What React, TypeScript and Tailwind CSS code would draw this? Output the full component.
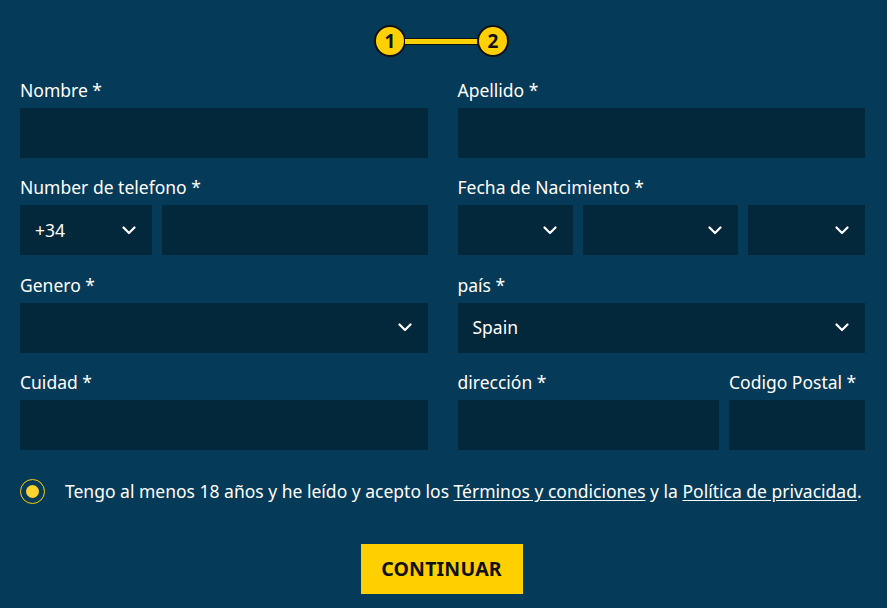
import { ReactNode } from 'react';

const font = { fontFamily: '"Noto Sans", "Open Sans", sans-serif' };

function Chevron() {
  return (
    <svg width="14" height="9" viewBox="0 0 14 9" className="shrink-0">
      <path d="M1.5 1.5 L7 7 L12.5 1.5" fill="none" stroke="#ffffff" strokeWidth="2.2" strokeLinecap="round" strokeLinejoin="round" />
    </svg>
  );
}

function Label({ children }: { children: ReactNode }) {
  return <div className="text-[17.5px] leading-6 text-white mb-[6px] whitespace-nowrap">{children}</div>;
}

function Input() {
  return <div className="h-[50px] bg-[#03273b]" />;
}

function Select({ value }: { value?: string }) {
  return (
    <div className="h-[50px] bg-[#03273b] flex items-center justify-between pl-[15px] pr-[16px] text-[17.5px] text-white">
      <span>{value ?? ''}</span>
      <Chevron />
    </div>
  );
}

function Step({ n }: { n: number }) {
  return (
    <div className="w-[32px] h-[32px] rounded-full bg-[#ffd000] border-2 border-[#111] flex items-center justify-center text-[19px] font-bold text-[#111] leading-none">
      {n}
    </div>
  );
}

export default function App() {
  return (
    <div className="w-[887px] h-[608px] bg-[#063a59] pt-[25px] pl-[20px] pr-[22px] overflow-hidden" style={font}>
      <div className="flex items-center justify-center">
        <div className="flex items-center mr-[2px]">
          <Step n={1} />
          <div className="w-[73px] h-[7px] bg-[#ffd000] border-y border-[#111] -mx-[1px]" />
          <Step n={2} />
        </div>
      </div>

      <div className="grid grid-cols-2 gap-x-[30px] gap-y-[17.3px] mt-[21px]">
        <div>
          <Label>Nombre *</Label>
          <Input />
        </div>
        <div>
          <Label>Apellido *</Label>
          <Input />
        </div>

        <div>
          <Label>Number de telefono *</Label>
          <div className="grid grid-cols-[132px_1fr] gap-[10px]">
            <Select value="+34" />
            <Input />
          </div>
        </div>
        <div>
          <Label>Fecha de Nacimiento *</Label>
          <div className="grid grid-cols-[116fr_155fr_117fr] gap-[10px]">
            <Select />
            <Select />
            <Select />
          </div>
        </div>

        <div>
          <Label>Genero *</Label>
          <Select />
        </div>
        <div>
          <Label>país *</Label>
          <Select value="Spain" />
        </div>

        <div>
          <Label>Cuidad *</Label>
          <Input />
        </div>
        <div className="grid grid-cols-[1fr_136px] gap-[10px]">
          <div>
            <Label>dirección *</Label>
            <Input />
          </div>
          <div>
            <Label>Codigo Postal *</Label>
            <Input />
          </div>
        </div>
      </div>

      <div className="flex items-center mt-[29px]">
        <div className="w-[25px] h-[25px] rounded-full border border-[#ffd000] flex items-center justify-center shrink-0">
          <div className="w-[13px] h-[13px] rounded-full bg-[#ffd22e]" />
        </div>
        <p className="ml-[20px] text-[17.5px] leading-6 text-white whitespace-nowrap">
          Tengo al menos 18 años y he leído y acepto los{' '}
          <a className="underline underline-offset-2">Términos y condiciones</a> y la{' '}
          <a className="underline underline-offset-2">Política de privacidad</a>.
        </p>
      </div>

      <div className="flex justify-center mt-[40px] pr-[2px]">
        <button className="w-[162px] h-[50px] bg-[#ffd000] text-[#111] font-bold text-[19.5px] tracking-[0.2px]">
          CONTINUAR
        </button>
      </div>
    </div>
  );
}
